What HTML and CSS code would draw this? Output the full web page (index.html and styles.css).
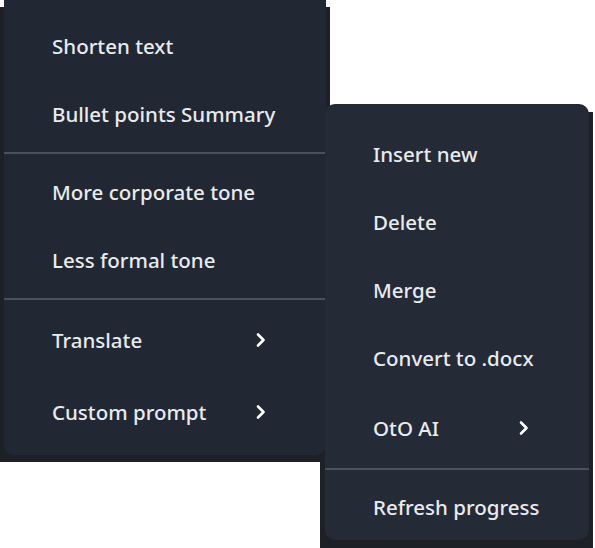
FILE: index.html
```
<!DOCTYPE html>
<html>
<head>
<meta charset="utf-8">
<link rel="stylesheet" href="styles.css">
</head>
<body>
<div class="stage">
  <div class="menu menu-main">
    <div class="group">
      <div class="item">Shorten text</div>
      <div class="item">Bullet points Summary</div>
    </div>
    <div class="divider"></div>
    <div class="group">
      <div class="item">More corporate tone</div>
      <div class="item">Less formal tone</div>
    </div>
    <div class="divider"></div>
    <div class="group">
      <div class="item sub"><span>Translate</span><svg class="chev" width="12" height="16" viewBox="0 0 12 16"><path d="M3 2.5 L8.5 8 L3 13.5" fill="none" stroke="#ffffff" stroke-width="2.6" stroke-linecap="round" stroke-linejoin="round"/></svg></div>
      <div class="item sub"><span>Custom prompt</span><svg class="chev" width="12" height="16" viewBox="0 0 12 16"><path d="M3 2.5 L8.5 8 L3 13.5" fill="none" stroke="#ffffff" stroke-width="2.6" stroke-linecap="round" stroke-linejoin="round"/></svg></div>
    </div>
  </div>
  <div class="menu menu-side">
    <div class="group">
      <div class="item">Insert new</div>
      <div class="item">Delete</div>
      <div class="item">Merge</div>
      <div class="item">Convert to .docx</div>
      <div class="item sub"><span>OtO AI</span><svg class="chev" width="12" height="16" viewBox="0 0 12 16"><path d="M3 2.5 L8.5 8 L3 13.5" fill="none" stroke="#ffffff" stroke-width="2.6" stroke-linecap="round" stroke-linejoin="round"/></svg></div>
    </div>
    <div class="divider"></div>
    <div class="group">
      <div class="item last">Refresh progress</div>
    </div>
  </div>
</div>
</body>
</html>
```
FILE: styles.css
```
html {
  background: #ffffff;
}
body {
  margin: 0;
  font-family: "Noto Sans", "Open Sans", sans-serif;
  width: 595px;
  height: 548px;
  overflow: hidden;
}
.stage {
  display: flex;
  align-items: flex-start;
  padding-left: 4px;
}
.menu {
  position: relative;
  background: #212733;
  color: #e8ebef;
  border-radius: 10px;
}
.menu::before {
  content: "";
  position: absolute;
  z-index: -1;
  background: #1d2026;
}
.menu-main {
  width: 322px;
  margin-top: -12px;
  padding: 24px 0 7px;
}
.menu-main::before {
  left: -4px;
  right: -4px;
  top: 19px;
  bottom: -7px;
}
.menu-side {
  width: 264px;
  margin-left: -1px;
  margin-top: 104px;
  padding-top: 16px;
  background: #242a36;
}
.menu-side::before {
  left: -5px;
  right: -4px;
  top: 8px;
  bottom: -8px;
}
.item {
  height: 68px;
  display: flex;
  align-items: center;
  justify-content: space-between;
  padding: 0 59px 0 48px;
  font-size: 20.5px;
  font-weight: 500;
  white-space: nowrap;
}
.item.sub {
  height: 72px;
}
.item.last {
  height: 66px;
}
.chev {
  display: block;
}
.divider {
  height: 2px;
  margin: 4px 0;
  background: #4a515c;
}
```
